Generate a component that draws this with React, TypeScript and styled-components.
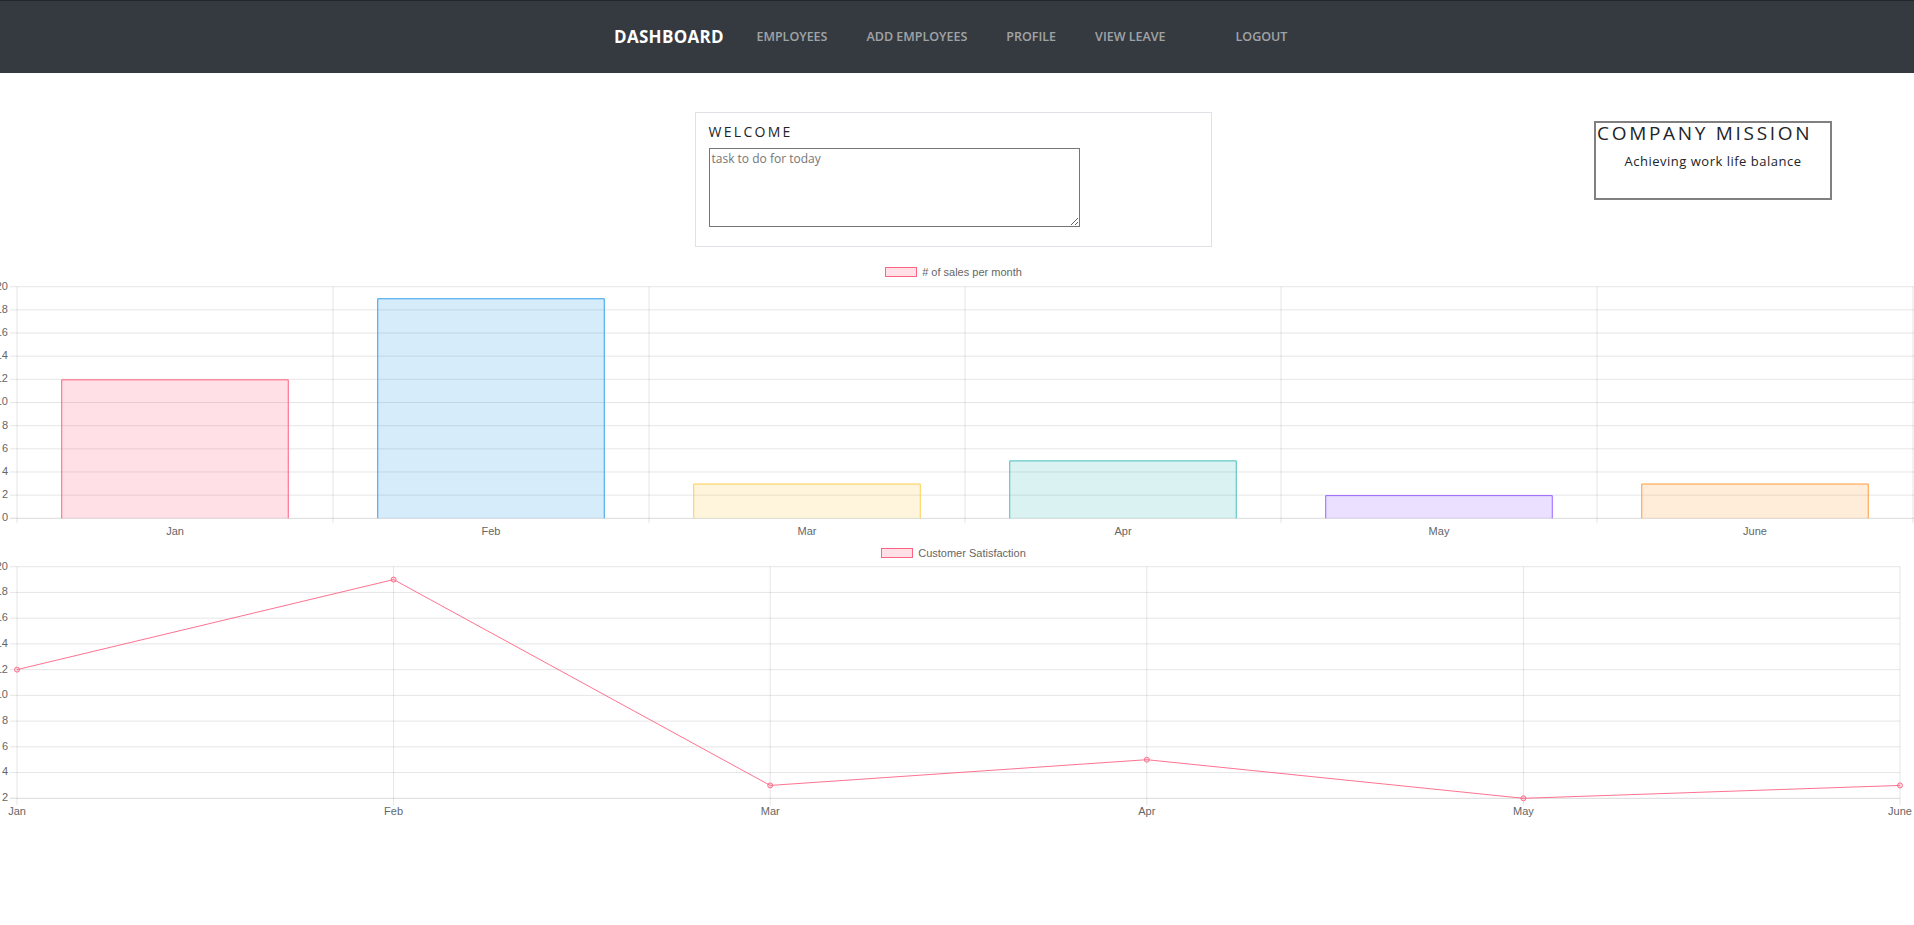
import styled, { createGlobalStyle } from "styled-components";

const GlobalStyle = createGlobalStyle`
  body {
    margin: 0;
    background: #fff;
    font-family: "Open Sans", "Liberation Sans", sans-serif;
    color: #212529;
  }
`;

const CHART_FONT = `"Liberation Sans", Arial, sans-serif`;

export const Navbar = styled.nav`
  box-sizing: border-box;
  height: 73px;
  border-top: 1px solid #222529;
  background: #343a40;
  display: flex;
  align-items: center;
  justify-content: center;
  padding: 0 0 2px 7px;
`;

export const Brand = styled.a`
  color: #fff;
  font-size: 17px;
  font-weight: 700;
  letter-spacing: 0.3px;
  margin-right: 13px;
`;

export const NavLink = styled.a<{ push?: boolean }>`
  color: rgba(255, 255, 255, 0.55);
  font-size: 12.5px;
  font-weight: 600;
  padding: 0 19.5px;
  margin-left: ${(p) => (p.push ? "31px" : "0")};
`;

export const TopRow = styled.section`
  display: grid;
  grid-template-columns: 1fr 517px 1fr;
  padding: 39px 8px 0 0;
`;

export const WelcomeCard = styled.div`
  grid-column: 2;
  border: 1px solid #dee2e6;
  padding: 9px 13px 19px;
`;

export const CardTitle = styled.h5`
  margin: 0 0 6px;
  font-size: 14px;
  font-weight: 400;
  line-height: 20px;
  letter-spacing: 2.3px;
`;

export const TaskInput = styled.textarea`
  display: block;
  box-sizing: border-box;
  width: 371px;
  height: 79px;
  margin: 0;
  padding: 1px 2px;
  border: 1px solid #767676;
  font-family: inherit;
  font-size: 12px;
  &::placeholder {
    color: #757575;
  }
`;

export const MissionCard = styled.div`
  justify-self: end;
  align-self: start;
  box-sizing: border-box;
  width: 238px;
  height: 79px;
  margin: 9px 74px 0 0;
  border: 2px solid #808080;
`;

export const MissionTitle = styled.h3`
  margin: 0;
  padding-left: 1px;
  font-size: 19px;
  font-weight: 400;
  line-height: 20px;
  letter-spacing: 2.7px;
  white-space: nowrap;
`;

export const MissionText = styled.p`
  margin: 9px 0 0;
  text-align: center;
  font-size: 13px;
  letter-spacing: 0.5px;
`;

export const ChartSection = styled.section`
  margin-top: 15px;
`;

export const Legend = styled.div`
  height: 20px;
  display: flex;
  align-items: center;
  justify-content: center;
  gap: 5px;
  padding-right: 7px;
  font-family: ${CHART_FONT};
  font-size: 11px;
  color: #666;
`;

export const Swatch = styled.span`
  box-sizing: border-box;
  width: 32px;
  height: 10px;
  background: rgba(255, 99, 132, 0.2);
  border: 1px solid rgba(255, 99, 132, 1);
`;

export const ChartSvg = styled.svg`
  display: block;
  width: 100%;
  overflow: visible;
  font-family: ${CHART_FONT};
  font-size: 11px;
`;

const months = ["Jan", "Feb", "Mar", "Apr", "May", "June"];
const values = [12, 19, 3, 5, 2, 3];
const barColors = [
  "255, 99, 132",
  "54, 162, 235",
  "255, 206, 86",
  "75, 192, 192",
  "153, 102, 255",
  "255, 159, 64",
];
const GRID = "rgba(0, 0, 0, 0.1)";

function BarChart() {
  const left = 17;
  const cat = 316;
  const top = 4.7;
  const bottom = 236.3;
  const step = (bottom - top) / 10;
  const scale = (v: number) => bottom - (v / 20) * (bottom - top);
  const ticks = Array.from({ length: 11 }, (_, i) => 20 - i * 2);
  return (
    <ChartSvg viewBox="0 0 1914 261" height={261}>
      {ticks.map((t, i) => (
        <g key={t}>
          <line
            x1={10}
            x2={1914}
            y1={top + i * step}
            y2={top + i * step}
            stroke={t === 0 ? "rgba(0,0,0,0.15)" : GRID}
          />
          <text x={8} y={top + i * step} textAnchor="end" dominantBaseline="middle" fill="#666">
            {t}
          </text>
        </g>
      ))}
      {Array.from({ length: 7 }, (_, i) => (
        <line
          key={i}
          x1={left + i * cat}
          x2={left + i * cat}
          y1={top}
          y2={bottom + 5}
          stroke={GRID}
        />
      ))}
      {values.map((v, i) => {
        const w = cat * 0.72;
        const x = left + cat * (i + 0.5) - w / 2;
        const y = scale(v);
        const c = barColors[i];
        return (
          <g key={i}>
            <rect x={x} y={y} width={w} height={bottom - y} fill={`rgba(${c}, 0.2)`} />
            <path
              d={`M${x + 0.5} ${bottom} V${y + 0.5} H${x + w - 0.5} V${bottom}`}
              fill="none"
              stroke={`rgb(${c})`}
            />
          </g>
        );
      })}
      {months.map((m, i) => (
        <text
          key={m}
          x={left + cat * (i + 0.5)}
          y={249.7}
          textAnchor="middle"
          dominantBaseline="middle"
          fill="#666"
        >
          {m}
        </text>
      ))}
    </ChartSvg>
  );
}

function LineChart() {
  const left = 17;
  const right = 1900;
  const span = (right - left) / 5;
  const top = 3.7;
  const bottom = 235.3;
  const step = (bottom - top) / 9;
  const scale = (v: number) => bottom - ((v - 2) / 18) * (bottom - top);
  const ticks = Array.from({ length: 10 }, (_, i) => 20 - i * 2);
  const pts = values.map((v, i) => [left + i * span, scale(v)]);
  return (
    <ChartSvg viewBox="0 0 1914 260" height={260}>
      {ticks.map((t, i) => (
        <g key={t}>
          <line
            x1={10}
            x2={right}
            y1={top + i * step}
            y2={top + i * step}
            stroke={t === 2 ? "rgba(0,0,0,0.15)" : GRID}
          />
          <text x={8} y={top + i * step} textAnchor="end" dominantBaseline="middle" fill="#666">
            {t}
          </text>
        </g>
      ))}
      {months.map((m, i) => (
        <g key={m}>
          <line
            x1={left + i * span}
            x2={left + i * span}
            y1={top}
            y2={bottom + 7}
            stroke={GRID}
          />
          <text
            x={left + i * span}
            y={248.7}
            textAnchor="middle"
            dominantBaseline="middle"
            fill="#666"
          >
            {m}
          </text>
        </g>
      ))}
      <polyline
        points={pts.map((p) => p.join(",")).join(" ")}
        fill="none"
        stroke="rgba(255, 99, 132, 0.9)"
        strokeWidth={1}
      />
      {pts.map(([x, y], i) => (
        <circle
          key={i}
          cx={x}
          cy={y}
          r={2.5}
          fill="rgba(255, 99, 132, 0.2)"
          stroke="rgba(255, 99, 132, 0.9)"
        />
      ))}
    </ChartSvg>
  );
}

function App() {
  return (
    <>
      <GlobalStyle />
      <Navbar>
        <Brand>DASHBOARD</Brand>
        <NavLink>EMPLOYEES</NavLink>
        <NavLink>ADD EMPLOYEES</NavLink>
        <NavLink>PROFILE</NavLink>
        <NavLink>VIEW LEAVE</NavLink>
        <NavLink push>LOGOUT</NavLink>
      </Navbar>
      <TopRow>
        <WelcomeCard>
          <CardTitle>WELCOME</CardTitle>
          <TaskInput placeholder="task to do for today" />
        </WelcomeCard>
        <MissionCard>
          <MissionTitle>COMPANY MISSION</MissionTitle>
          <MissionText>Achieving work life balance</MissionText>
        </MissionCard>
      </TopRow>
      <ChartSection>
        <Legend>
          <Swatch />
          # of sales per month
        </Legend>
        <BarChart />
        <Legend>
          <Swatch />
          Customer Satisfaction
        </Legend>
        <LineChart />
      </ChartSection>
    </>
  );
}

export default App;
